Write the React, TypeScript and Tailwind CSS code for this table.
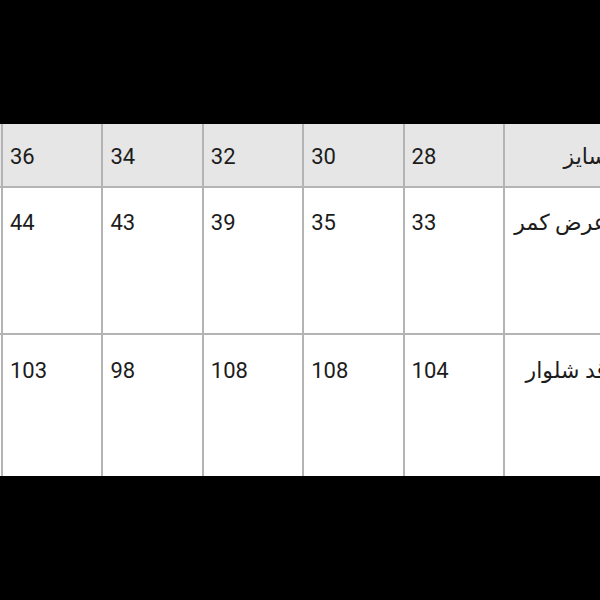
const sizes = ['36', '34', '32', '30', '28']

const rows = [
  { label: 'عرض کمر', values: ['44', '43', '39', '35', '33'], height: 'h-[147px]', pad: 'pt-[21px]' },
  { label: 'قد شلوار', values: ['103', '98', '108', '108', '104'], height: 'h-[141px]', pad: 'pt-[22px]' },
]

function Cell({ children, pad }: { children?: React.ReactNode; pad: string }) {
  return (
    <div className={`w-[100.4px] shrink-0 border-l-2 border-[#b4b4b4] pl-[7px] leading-[28px] ${pad}`}>
      {children}
    </div>
  )
}

function LabelCell({ children, pad }: { children: React.ReactNode; pad: string }) {
  return (
    <div
      dir="rtl"
      className={`w-[110px] shrink-0 border-l-2 border-[#b4b4b4] pr-[6px] text-right leading-[28px] whitespace-nowrap ${pad}`}
    >
      {children}
    </div>
  )
}

export default function App() {
  return (
    <div className="w-[600px] h-[600px] bg-black flex items-center overflow-hidden">
      <div
        className="w-[620px] shrink-0 text-[22px] text-[#1c1c1c] bg-white"
        style={{ fontFamily: "Roboto, 'DejaVu Sans', sans-serif" }}
      >
        {/* Header */}
        <div className="flex h-[64px] bg-[#e6e6e6] border-b-2 border-[#b4b4b4]">
          <div className="w-[1px] shrink-0" />
          {sizes.map((s) => (
            <Cell key={s} pad="pt-[19px]">
              {s}
            </Cell>
          ))}
          <LabelCell pad="pt-[19px]">سایز</LabelCell>
        </div>

        {/* Body rows */}
        {rows.map((row, i) => (
          <div
            key={row.label}
            className={`flex ${row.height} ${i < rows.length - 1 ? 'border-b-2 border-[#b4b4b4]' : ''}`}
          >
            <div className="w-[1px] shrink-0" />
            {row.values.map((v, j) => (
              <Cell key={j} pad={row.pad}>
                {v}
              </Cell>
            ))}
            <LabelCell pad={row.pad}>{row.label}</LabelCell>
          </div>
        ))}
      </div>
    </div>
  )
}
